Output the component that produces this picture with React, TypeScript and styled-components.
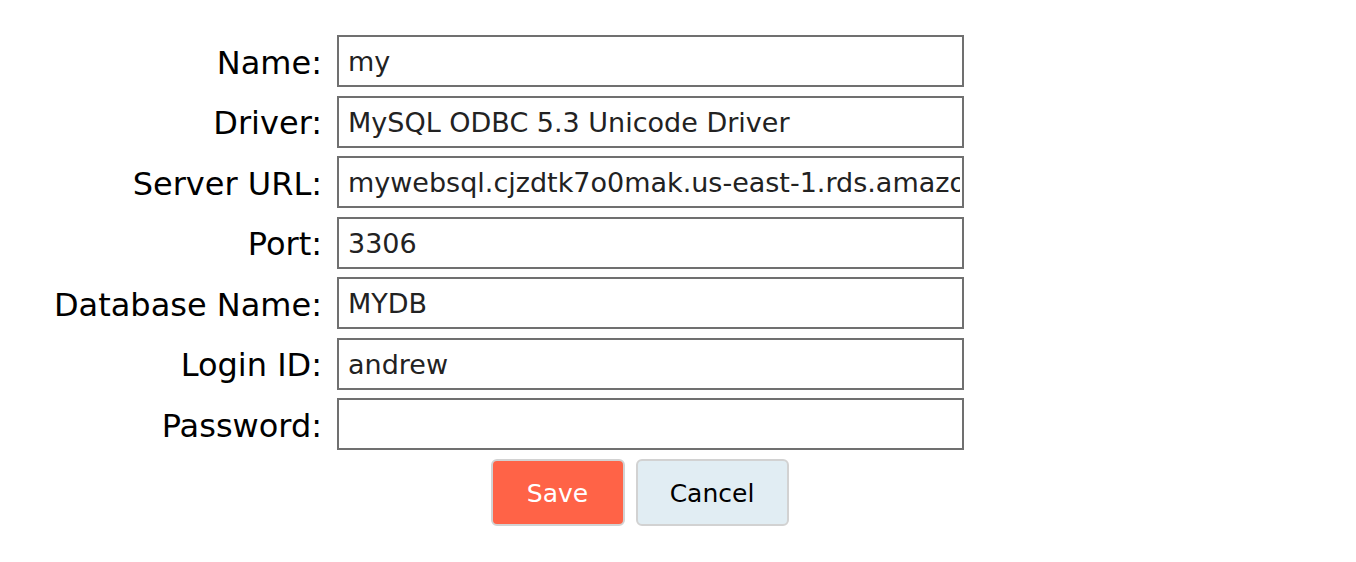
import { Fragment } from "react"
import styled, { createGlobalStyle } from "styled-components"

const GlobalStyle = createGlobalStyle`
  body {
    margin: 0;
    background: #fff;
    font-family: "DejaVu Sans", Verdana, sans-serif;
  }
`

const FormGrid = styled.div`
  display: grid;
  grid-template-columns: 322px 627px;
  column-gap: 15px;
  row-gap: 8.5px;
  padding-top: 35px;
`

const Label = styled.label`
  display: flex;
  align-items: center;
  justify-content: flex-end;
  height: 52px;
  padding-top: 3px;
  box-sizing: border-box;
  font-size: 32px;
  color: #000;
  white-space: nowrap;
`

const Field = styled.input`
  box-sizing: border-box;
  width: 627px;
  height: 52px;
  margin: 0;
  padding: 1px 2px 0 9px;
  border: 2px solid #707070;
  border-radius: 0;
  background: #fff;
  font-family: "DejaVu Sans", Verdana, sans-serif;
  font-size: 27px;
  color: #222;
  outline: none;
`

const ButtonRow = styled.div`
  grid-column: 2;
  display: flex;
  justify-content: center;
  gap: 11px;
  padding-right: 22px;
`

const Button = styled.button<{ $primary?: boolean }>`
  box-sizing: border-box;
  height: 67px;
  width: ${(p) => (p.$primary ? "134px" : "153px")};
  padding-top: 3px;
  border: 2px solid #d2d2d2;
  border-radius: 6px;
  background: ${(p) => (p.$primary ? "#ff6347" : "#e1edf3")};
  color: ${(p) => (p.$primary ? "#fff" : "#000")};
  font-family: "DejaVu Sans", Verdana, sans-serif;
  font-size: 25px;
  cursor: pointer;
`

const fields = [
  { label: "Name:", value: "my" },
  { label: "Driver:", value: "MySQL ODBC 5.3 Unicode Driver" },
  { label: "Server URL:", value: "mywebsql.cjzdtk7o0mak.us-east-1.rds.amazonaws.com" },
  { label: "Port:", value: "3306" },
  { label: "Database Name:", value: "MYDB" },
  { label: "Login ID:", value: "andrew" },
  { label: "Password:", value: "" },
]

const App = () => {
  return (
    <>
      <GlobalStyle />
      <FormGrid>
        {fields.map((f) => (
          <Fragment key={f.label}>
            <Label>{f.label}</Label>
            <Field
              type={f.label === "Password:" ? "password" : "text"}
              defaultValue={f.value}
              readOnly
            />
          </Fragment>
        ))}
        <ButtonRow>
          <Button $primary>Save</Button>
          <Button>Cancel</Button>
        </ButtonRow>
      </FormGrid>
    </>
  )
}

export default App
